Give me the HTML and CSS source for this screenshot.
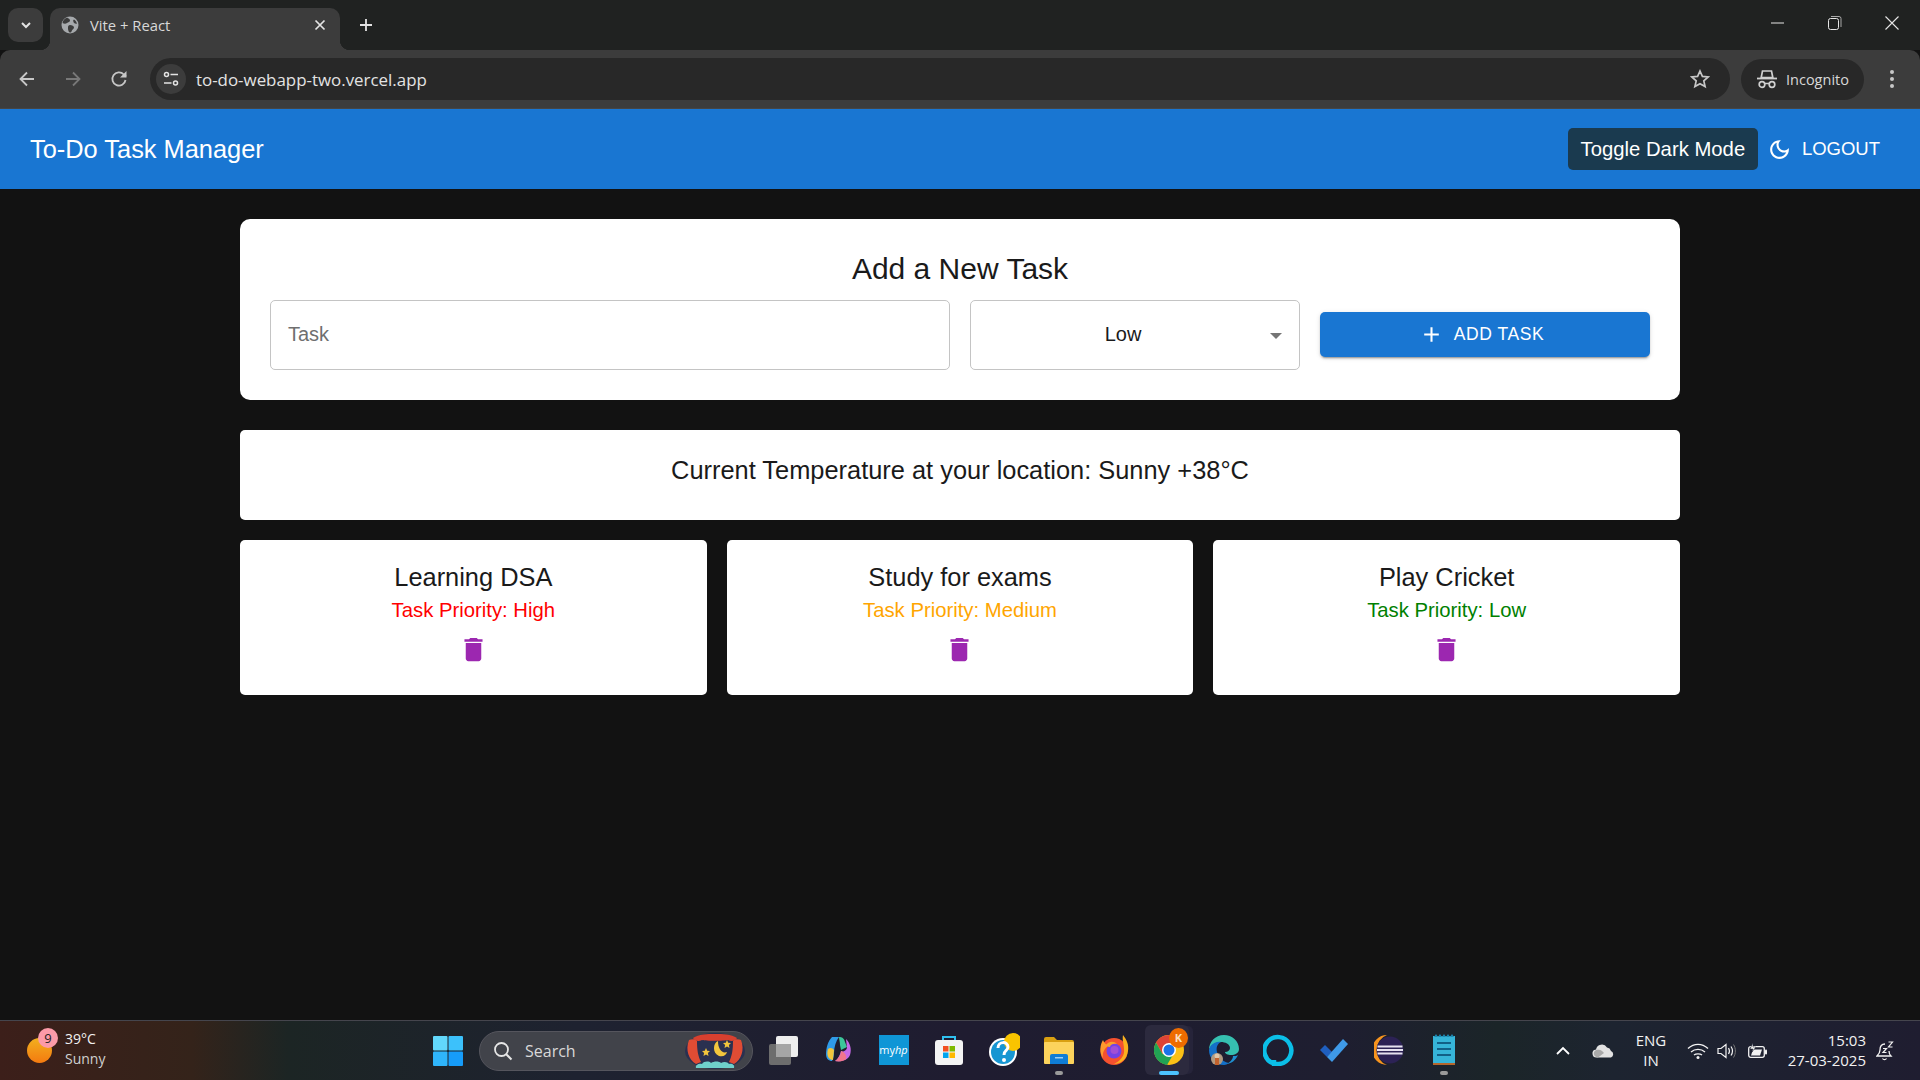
FILE: index.html
```html
<!DOCTYPE html>
<html lang="en">
<head>
    <meta charset="UTF-8">
    <title>To-Do Task Manager</title>
    <link rel="stylesheet" href="styles.css">
</head>
<body>
    <!-- browser tabs -->
    <div class="tabstrip">
        <div class="tab-search">
            <svg width="14" height="14" viewBox="0 0 14 14"><path d="M3 5l4 4 4-4" fill="none" stroke="#e3e3e3" stroke-width="2"/></svg>
        </div>
        <div class="tab">
            <svg class="favicon" width="18" height="18" viewBox="0 0 18 18">
                <circle cx="9" cy="9" r="8.5" fill="#a6a9ac"/>
                <path d="M6 1.500c1.500 1 3 1.500 3 3S7 6 6 7 3 8 1.500 7C1.800 4.500 3.500 2.500 6 1.500zM9 9c2 0 4 1 4 2.500s-2 2-2.500 4S8 16.500 7.500 15 7 13 7 11.500 7.500 9 9 9zM13 3.500c1.500 1 2.500 2.500 3 4-1.500.5-3 0-3.500-1.500S12 4 13 3.500z" fill="#3c3c3c"/>
            </svg>
            <span class="tab-title">Vite + React</span>
            <svg class="tab-close" width="12" height="12" viewBox="0 0 12 12"><path d="M1.500 1.500l9 9M10.500 1.500l-9 9" stroke="#e3e3e3" stroke-width="1.700"/></svg>
        </div>
        <svg class="new-tab" width="14" height="14" viewBox="0 0 14 14"><path d="M7 1v12M1 7h12" stroke="#e3e3e3" stroke-width="1.800"/></svg>
        <div class="window-controls">
            <div class="win-btn"><svg width="14" height="14" viewBox="0 0 14 14"><path d="M0 7h13" stroke="#e6e6e6" stroke-width="1"/></svg></div>
            <div class="win-btn"><svg width="14" height="14" viewBox="0 0 14 14"><rect x=".5" y="2.500" width="10" height="11" rx="2" fill="none" stroke="#e6e6e6"/><path d="M3 .5h8a2 2 0 0 1 2 2V11" fill="none" stroke="#a8a8a8"/></svg></div>
            <div class="win-btn"><svg width="14" height="14" viewBox="0 0 14 14"><path d="M.5.5l13 13M13.500.5l-13 13" stroke="#e6e6e6" stroke-width="1.100"/></svg></div>
        </div>
    </div>

    <!-- browser toolbar -->
    <div class="toolbar">
        <div class="nav-btn"><svg width="18" height="18" viewBox="0 0 18 18"><path d="M16 9H3M9 2.500L2.500 9 9 15.500" fill="none" stroke="#c7c7c7" stroke-width="1.800"/></svg></div>
        <div class="nav-btn"><svg width="18" height="18" viewBox="0 0 18 18"><path d="M2 9h13M9 2.500L15.500 9 9 15.500" fill="none" stroke="#787878" stroke-width="1.800"/></svg></div>
        <div class="nav-btn"><svg width="18" height="18" viewBox="0 0 18 18"><path d="M15.500 10a6.600 6.600 0 1 1-1.700-5.500L16 6.500" fill="none" stroke="#c7c7c7" stroke-width="1.800"/><path d="M16.500 1v6.500H10z" fill="#c7c7c7"/></svg></div>
        <div class="omnibox">
            <div class="site-info">
                <svg width="16" height="16" viewBox="0 0 16 16"><circle cx="3.500" cy="3.500" r="2" fill="none" stroke="#e3e3e3" stroke-width="1.500"/><path d="M7.500 3.500H15M1 12h7.500" stroke="#e3e3e3" stroke-width="1.500"/><circle cx="12.500" cy="12" r="2" fill="none" stroke="#e3e3e3" stroke-width="1.500"/></svg>
            </div>
            <span class="url">to-do-webapp-two.vercel.app</span>
            <svg class="star" width="20" height="20" viewBox="0 0 20 20"><path d="M10 2l2.400 5.400 5.800.6-4.400 3.900 1.300 5.700L10 14.700l-5.100 2.900 1.300-5.700L1.800 8l5.800-.6z" fill="none" stroke="#c7c7c7" stroke-width="1.700"/></svg>
        </div>
        <div class="incognito">
            <svg width="20" height="20" viewBox="0 0 20 20"><path d="M5.500 2h9l1.300 6.500H4.200z" fill="none" stroke="#d0d0d0" stroke-width="1.700"/><path d="M0 9.500h20" stroke="#d0d0d0" stroke-width="1.800"/><circle cx="5" cy="15.500" r="2.800" fill="none" stroke="#d0d0d0" stroke-width="1.700"/><circle cx="15" cy="15.500" r="2.800" fill="none" stroke="#d0d0d0" stroke-width="1.700"/><path d="M7.500 14.500h5" stroke="#d0d0d0" stroke-width="1.500"/></svg>
            <span>Incognito</span>
        </div>
        <div class="menu-dots"><i></i><i></i><i></i></div>
    </div>

    <!-- the app -->
    <header class="app-bar">
        <div class="app-title">To-Do Task Manager</div>
        <button class="toggle-btn">Toggle Dark Mode</button>
        <svg class="moon" width="25" height="25" viewBox="0 0 24 24"><path d="M9.370 5.510c-.18.64-.27 1.310-.27 1.990 0 4.080 3.320 7.400 7.400 7.400.68 0 1.350-.09 1.990-.27C17.450 17.190 14.930 19 12 19c-3.860 0-7-3.140-7-7 0-2.930 1.810-5.450 4.370-6.490zM12 3c-4.970 0-9 4.030-9 9s4.030 9 9 9 9-4.030 9-9c0-.46-.04-.92-.1-1.360-.98 1.370-2.580 2.260-4.400 2.260-2.980 0-5.400-2.420-5.400-5.400 0-1.810.89-3.420 2.260-4.400-.44-.06-.9-.1-1.360-.1z" fill="#fff"/></svg>
        <span class="logout">LOGOUT</span>
    </header>

    <main class="content">
        <section class="card form-card">
            <h2 class="form-heading">Add a New Task</h2>
            <div class="form-row">
                <div class="field task-field">Task</div>
                <div class="field priority-field">
                    <span class="priority-value">Low</span>
                    <span class="select-arrow"></span>
                </div>
                <button class="add-btn">
                    <svg width="25" height="25" viewBox="0 0 24 24"><path d="M19 13h-6v6h-2v-6H5v-2h6V5h2v6h6v2z" fill="#fff"/></svg>
                    <span>ADD TASK</span>
                </button>
            </div>
        </section>

        <section class="card weather-card">Current Temperature at your location: Sunny +38°C</section>

        <section class="task-grid">
            <div class="card task-card">
                <div class="task-name">Learning DSA</div>
                <div class="task-priority high">Task Priority: High</div>
                <svg class="trash" width="31" height="31" viewBox="0 0 24 24"><path d="M6 19c0 1.100.9 2 2 2h8c1.100 0 2-.9 2-2V7H6v12zM19 4h-3.500l-1-1h-5l-1 1H5v2h14V4z"/></svg>
            </div>
            <div class="card task-card">
                <div class="task-name">Study for exams</div>
                <div class="task-priority medium">Task Priority: Medium</div>
                <svg class="trash" width="31" height="31" viewBox="0 0 24 24"><path d="M6 19c0 1.100.9 2 2 2h8c1.100 0 2-.9 2-2V7H6v12zM19 4h-3.500l-1-1h-5l-1 1H5v2h14V4z"/></svg>
            </div>
            <div class="card task-card">
                <div class="task-name">Play Cricket</div>
                <div class="task-priority low">Task Priority: Low</div>
                <svg class="trash" width="31" height="31" viewBox="0 0 24 24"><path d="M6 19c0 1.100.9 2 2 2h8c1.100 0 2-.9 2-2V7H6v12zM19 4h-3.500l-1-1h-5l-1 1H5v2h14V4z"/></svg>
            </div>
        </section>
    </main>

    <!-- windows taskbar -->
    <footer class="taskbar">
        <div class="weather">
            <div class="sun"><span class="sun-badge">9</span></div>
            <div class="weather-text">
                <div>39°C</div>
                <div class="dim">Sunny</div>
            </div>
        </div>

        <svg class="start" width="30" height="30" viewBox="0 0 30 30">
            <rect x="0" y="0" width="14.500" height="14.500" rx="1" fill="#62d8fb"/>
            <rect x="15.500" y="0" width="14.500" height="14.500" rx="1" fill="#3cc1fb"/>
            <rect x="0" y="15.500" width="14.500" height="14.500" rx="1" fill="#2fb5fb"/>
            <rect x="15.500" y="15.500" width="14.500" height="14.500" rx="1" fill="#169cf9"/>
        </svg>

        <div class="search-pill">
            <svg width="20" height="20" viewBox="0 0 20 20"><circle cx="8.500" cy="8.500" r="6.500" fill="none" stroke="#e6e6e6" stroke-width="1.800"/><path d="M13 13l5.500 5.500" stroke="#e6e6e6" stroke-width="2"/></svg>
            <span class="search-label">Search</span>
            <svg class="doodle" width="64" height="36" viewBox="0 0 60 36">
                <ellipse cx="30" cy="18" rx="30" ry="18" fill="#2a3050"/>
                <path d="M8 5C14 1 22 1 30 1s16 0 22 4c-1 3-6 4-9 2-4 1-22 1-26 0-3 2-8 1-9-2z" fill="#d8402f"/>
                <path d="M4 7c3-1 6-1 8 1 0 9 1 15 4 21l-5 2C4 27 0 17 4 7zM56 7c-3-1-6-1-8 1 0 9-1 15-4 21l5 2c7-4 11-14 7-24z" fill="#e04c34"/>
                <path d="M11 35c-1-3 3-5 6-4 2-3 7-3 9-1 3-2 8-2 10 0 3-2 7-1 8 1 3-1 6 1 5 4z" fill="#6fd0cb"/>
                <path d="M33 8c-5 2-6 12 1 15 5 1 7-1 8-4-5 2-9-3-9-11z" fill="#f2c53d"/>
                <path d="M21 15l1.200 2.800 2.800.3-2.100 1.900.6 2.900-2.500-1.500-2.500 1.500.6-2.900-2.100-1.900 2.800-.3zM42 7l1.200 2.800 2.800.3-2.100 1.900.6 2.900-2.500-1.500-2.500 1.500.6-2.900-2.100-1.900 2.800-.3z" fill="#f2c53d"/>
            </svg>
        </div>

        <div class="task-icons">
            <!-- task view -->
            <div class="slot"><svg width="30" height="30" viewBox="0 0 30 30"><rect x="0" y="9" width="22" height="21" rx="2" fill="#6d6d6d"/><rect x="7" y="1" width="22" height="21" rx="2" fill="#eeeeee"/><rect x="7" y="9" width="15" height="13" fill="#a5a5a5"/></svg></div>
            <!-- copilot -->
            <div class="slot"><svg width="30" height="30" viewBox="0 0 30 30">
                <path d="M8 2h7c-3 4-5 10-5 16 0 3-1 6-2 8-3 0-6-2-6-7 0-6 2-13 6-17z" fill="#2f9be8"/>
                <path d="M4 14c2-2 5-1 6 1l-1 10c-4 0-7-4-5-11z" fill="#f2c53d"/>
                <path d="M15 2c3 0 5 1 6 5l2 5-6 3-1-5c0-3-1-6-1-8z" fill="#3cc59a"/>
                <path d="M22 4c4 4 6 10 4 16-2 5-8 7-15 6 3-2 5-6 6-10 2 1 5 0 6-3z" fill="#c568e6"/>
                <path d="M17 16c0 4-3 8-6 10 5 1 9 0 11-2 1-3-1-7-5-8z" fill="#f0758c"/>
            </svg></div>
            <!-- myhp -->
            <div class="slot"><div class="myhp">my<b>hp</b></div></div>
            <!-- store -->
            <div class="slot"><svg width="30" height="30" viewBox="0 0 30 30">
                <path d="M9 6V2h12v4" fill="none" stroke="#2fc0f0" stroke-width="2"/>
                <rect x="1" y="5" width="28" height="25" rx="3" fill="#f4f4f4"/>
                <rect x="9" y="11" width="5.500" height="5.500" fill="#f25022"/><rect x="15.500" y="11" width="5.500" height="5.500" fill="#7fba00"/>
                <rect x="9" y="17.500" width="5.500" height="5.500" fill="#00a4ef"/><rect x="15.500" y="17.500" width="5.500" height="5.500" fill="#ffb900"/>
            </svg></div>
            <!-- get help -->
            <div class="slot help-slot"><svg width="32" height="34" viewBox="0 0 32 34">
                <circle cx="15" cy="19" r="14" fill="#fff"/><circle cx="15" cy="19" r="12" fill="#1796d2"/>
                <circle cx="25" cy="9" r="9" fill="#f9c400"/>
                <path d="M10 15c0-7 10-7 10-1 0 4-4 3-4 8" fill="none" stroke="#fff" stroke-width="3"/><circle cx="16" cy="27" r="2" fill="#fff"/>
            </svg></div>
            <!-- explorer -->
            <div class="slot pinned"><svg width="30" height="30" viewBox="0 0 30 30">
                <path d="M0 4a2 2 0 0 1 2-2h8l3 3h15a2 2 0 0 1 2 2v4H0z" fill="#d9a011"/>
                <rect x="0" y="7" width="30" height="22" rx="1" fill="#fcd35c"/>
                <path d="M6 21a2 2 0 0 1 2-2h14a2 2 0 0 1 2 2v8H6z" fill="#0f7dd6"/><rect x="11" y="22" width="8" height="1.500" fill="#9bd0f5"/>
            </svg></div>
            <!-- firefox -->
            <div class="slot"><svg width="30" height="30" viewBox="0 0 30 30">
                <circle cx="15" cy="16.500" r="13.500" fill="#f5512f"/>
                <path d="M24 0c4 5 6 10 5 16-1 8-7 13-14 13 6-3 11-8 10-15 0-5-2-9-1-14z" fill="#fbb01e"/>
                <path d="M4 5c-3 5-4 12 0 18-1-6 2-10 6-13C7 10 5 8 4 5z" fill="#ff9a2d"/>
                <circle cx="15" cy="16" r="7.500" fill="#7542e5"/><circle cx="15.500" cy="15" r="4" fill="#a14fd6"/>
                <path d="M7 10c3-4 8-4 11-1-4-1-7 1-7 3-2 0-3-1-4-2z" fill="#f8a02c"/>
            </svg></div>
            <!-- chrome, running -->
            <div class="slot active">
                <svg width="30" height="30" viewBox="0 0 30 30">
                    <circle cx="15" cy="15" r="15" fill="#fbc116"/>
                    <path d="M15 0A15 15 0 0 0 2 7.500L8.500 19 15 8h13A15 15 0 0 0 15 0z" fill="#dd4337"/>
                    <path d="M2 7.500A15 15 0 0 0 13 30l6.500-11-11 0z" fill="#21a354"/>
                    <circle cx="15" cy="15" r="7" fill="#fff"/><circle cx="15" cy="15" r="5.500" fill="#1a73e8"/>
                </svg>
                <span class="chrome-badge">K</span>
            </div>
            <!-- edge -->
            <div class="slot"><svg width="30" height="30" viewBox="0 0 30 30">
                <path d="M15 0c8 0 15 6 15 14 0 4-4 6-8 6-3 0-6-1-6-3 3 0 5-2 5-4 0-4-5-6-9-6C6 7 1 11 0 15 0 7 6 0 15 0z" fill="#36c0b0"/>
                <path d="M0 15c1-5 6-9 12-8-4 2-5 6-4 10 1 5 6 10 12 11-2 1-3 2-5 2C6 30 0 23 0 15z" fill="#1470c8"/>
                <path d="M29 20c-2 5-7 9-12 9 4-1 7-5 7-8 2 0 4 0 5-1z" fill="#1f8fd0"/>
                <circle cx="8" cy="24" r="6" fill="#b19a80"/><circle cx="8" cy="21" r="2.500" fill="#e0c6a8"/><rect x="6" y="23" width="4" height="7" fill="#c2622d"/>
            </svg></div>
            <!-- alexa -->
            <div class="slot"><svg width="32" height="32" viewBox="0 0 32 32"><path d="M11 29.500A13.500 13.500 0 1 1 16 30l-5 0 0-4" fill="none" stroke="#0bbfe8" stroke-width="4.500"/></svg></div>
            <!-- to do -->
            <div class="slot"><svg width="30" height="30" viewBox="0 0 30 30"><path d="M1 15l5-5 7 7-5 5z" fill="#1f5fbf"/><path d="M8 22L24 4l5 5-16 18z" fill="#3f9ae8"/></svg></div>
            <!-- eclipse -->
            <div class="slot"><svg width="30" height="30" viewBox="0 0 30 30">
                <path d="M13 0a15 15 0 0 0 0 30A15 15 0 0 1 3 15 15 15 0 0 1 13 0z" fill="#f7941e"/>
                <circle cx="16" cy="15" r="13.500" fill="#2c2255"/>
                <path d="M3.500 10.500h25v2h-25zM3 14h26v2H3zM3.500 17.500h25v2h-25z" fill="#e6e2f0"/>
            </svg></div>
            <!-- notepad -->
            <div class="slot pinned"><svg width="24" height="32" viewBox="0 0 24 32">
                <rect x="1" y="2" width="22" height="27" fill="#36b4d8"/><rect x="1" y="29" width="22" height="2" fill="#b5662b"/>
                <path d="M2 3l2-3 2 3 2-3 2 3 2-3 2 3 2-3 2 3 2-3 2 3z" fill="#1d88b0"/>
                <path d="M5 9h14M5 15h14M5 21h14" stroke="#125f86" stroke-width="2"/>
            </svg></div>
        </div>

        <div class="tray">
            <div class="tray-slot chevron"><svg width="14" height="9" viewBox="0 0 14 9"><path d="M1 8l6-6 6 6" fill="none" stroke="#fff" stroke-width="1.800"/></svg></div>
            <div class="tray-slot cloud"><svg width="22" height="14" viewBox="0 0 22 14"><path d="M5 13.500a4 4 0 0 1-1-8 6 6 0 0 1 11-2 5 5 0 0 1 4 3.500 3.500 3.500 0 0 1 0 6.500z" fill="#e2e2e2"/><path d="M4 6c5-1 6 1 8 3l-6 4.500H5A4 4 0 0 1 4 6z" fill="#a9a9a9"/></svg></div>
            <div class="tray-slot lang"><div>ENG</div><div>IN</div></div>
            <div class="tray-slot wifi"><svg width="22" height="16" viewBox="0 0 22 16"><path d="M1 5.500c6-5.500 14-5.500 20 0M4 9c4-3.500 10-3.500 14 0M7 12c2-1.500 6-1.500 8 0" fill="none" stroke="#f2f2f2" stroke-width="1.400"/><circle cx="11" cy="14.500" r="1.500" fill="#f2f2f2"/></svg></div>
            <div class="tray-slot vol"><svg width="20" height="16" viewBox="0 0 20 16"><path d="M1 5.500h3L9 1.500v13l-5-4H1z" fill="none" stroke="#f2f2f2" stroke-width="1.200"/><path d="M11.500 5c1.300 2 1.300 4 0 6M14 3.500c2 3 2 6 0 9" fill="none" stroke="#f2f2f2" stroke-width="1.200"/><path d="M16.500 1.500c2.500 4 2.500 9 0 13" fill="none" stroke="#777" stroke-width="1"/></svg></div>
            <div class="tray-slot battery"><svg width="20" height="16" viewBox="0 0 20 16"><rect x=".7" y="3.700" width="15.600" height="10.600" rx="2" fill="none" stroke="#f2f2f2" stroke-width="1.300"/><rect x="17" y="6.500" width="2" height="5" rx="1" fill="#f2f2f2"/><path d="M3 12.500l2-6h9l-2 6z" fill="#f2f2f2"/><path d="M5 0L2 6h3L4 9l4-5H5z" fill="#f2f2f2" stroke="#1c2030" stroke-width=".5"/></svg></div>
            <div class="clock"><div>15:03</div><div>27-03-2025</div></div>
            <div class="tray-slot bell"><svg width="18" height="20" viewBox="0 0 18 20"><path d="M9 3C5 3 4 6 4 9c0 3-1 4-3 6h14c-2-2-2-3-2-5M6.500 17.500c1 1.500 3 1.500 4 0" fill="none" stroke="#f2f2f2" stroke-width="1.300"/><path d="M7 7.500h3.500L7 11.500h3.500M12.500 1h4l-4 5h4" fill="none" stroke="#f2f2f2" stroke-width="1.200"/></svg></div>
        </div>
    </footer>
</body>
</html>
```

FILE: styles.css
```css
* { box-sizing: border-box; }
html, body { height: 100%; }
body { margin: 0; height: 1080px; display: flex; flex-direction: column; overflow: hidden; background: #121212; font-family: "Liberation Sans", Arial, sans-serif; }
svg { display: block; flex: none; }

/* browser chrome */
.tabstrip { height: 50px; flex: none; background: #202221; display: flex; align-items: flex-start; padding: 8px 0 0 8px; font-family: "Open Sans", sans-serif; }
.tab-search { width: 35px; height: 34px; background: #3c3c3c; border-radius: 10px; display: flex; align-items: center; justify-content: center; }
.tab { position: relative; width: 290px; height: 42px; margin-left: 7px; background: #3c3c3c; border-radius: 10px 10px 0 0; display: flex; align-items: center; padding: 0 14px 8px 11px; color: #d8d8d8; font-size: 14.800px; }
.tab::after { content: ""; position: absolute; right: -10px; bottom: 0; width: 10px; height: 10px; background: radial-gradient(circle at 100% 0, transparent 10px, #3c3c3c 10.500px); }
.tab::before { content: ""; position: absolute; left: -10px; bottom: 0; width: 10px; height: 10px; background: radial-gradient(circle at 0 0, transparent 10px, #3c3c3c 10.500px); }
.tab-title { margin-left: 11px; flex: 1; }
.new-tab { margin: 10px 0 0 19px; }
.window-controls { margin-left: auto; margin-top: -8px; display: flex; }
.win-btn { width: 57px; height: 46px; display: flex; align-items: center; justify-content: center; }

.toolbar { height: 59px; flex: none; background: #3c3c3c; border-bottom: 1px solid #454545; border-radius: 10px 10px 0 0; display: flex; align-items: center; padding-left: 4px; font-family: "Open Sans", sans-serif; }
.nav-btn { width: 46px; height: 42px; display: flex; align-items: center; justify-content: center; }
.omnibox { flex: 1; height: 42px; margin-left: 8px; background: #282828; border-radius: 21px; display: flex; align-items: center; padding: 0 20px 0 6px; }
.site-info { width: 30px; height: 30px; border-radius: 50%; background: #3c3c3c; display: flex; align-items: center; justify-content: center; }
.url { margin-left: 10px; flex: 1; color: #e3e3e3; font-size: 16.900px; }
.incognito { width: 123px; height: 41px; margin-left: 11px; background: #282828; border-radius: 21px; display: flex; align-items: center; padding-left: 16px; gap: 9px; color: #d8d8d8; font-size: 14.500px; }
.menu-dots { width: 56px; display: flex; flex-direction: column; align-items: center; gap: 3px; }
.menu-dots i { width: 4px; height: 4px; border-radius: 50%; background: #c7c7c7; }

/* app bar */
.app-bar { height: 80px; flex: none; background: #1976d2; color: #fff; display: flex; align-items: center; padding: 0 40px 0 30px; }
.app-title { flex: 1; font-size: 25.400px; }
.toggle-btn { width: 190px; height: 42px; margin-right: -1px; border: 0; border-radius: 5px; background: #1a3a4f; color: #fff; font: 20.300px "Liberation Sans", Arial, sans-serif; padding: 0; }
.moon { margin-left: 10px; }
.logout { margin-left: 10px; font-size: 18.500px; }

/* main page */
.content { flex: 1; padding: 30px 240px 0; display: flex; flex-direction: column; }
.card { background: #fff; color: #1a1a1a; }
.form-card { height: 181px; padding: 30px; border-radius: 10px; }
.form-heading { margin: 0 0 11px; font-size: 30px; font-weight: 400; line-height: 40px; text-align: center; }
.form-row { display: grid; grid-template-columns: 680px 330px 330px; column-gap: 20px; align-items: center; }
.field { height: 70px; padding-bottom: 2px; border: 1px solid #c4c4c4; border-radius: 5px; display: flex; align-items: center; font-size: 20px; }
.task-field { padding-left: 17px; color: #6f6f6f; }
.priority-field { position: relative; justify-content: center; padding-right: 24px; }
.select-arrow { position: absolute; right: 17px; top: 32px; border-left: 6px solid transparent; border-right: 6px solid transparent; border-top: 6px solid #757575; }
.add-btn { height: 45px; margin-top: -1px; border: 0; border-radius: 5px; background: #1976d2; color: #fff; display: flex; align-items: center; justify-content: center; gap: 10px; font: 17.500px "Liberation Sans", Arial, sans-serif; letter-spacing: .6px; padding: 0 7px 1px 0; box-shadow: 0 3px 1px -2px rgba(0,0,0,.2), 0 2px 2px rgba(0,0,0,.14), 0 1px 5px rgba(0,0,0,.12); }
.weather-card { height: 90px; margin-top: 30px; padding-top: 25px; border-radius: 5px; font-size: 25.400px; line-height: 30px; text-align: center; }
.task-grid { margin-top: 20px; display: grid; grid-template-columns: repeat(3, 1fr); gap: 20px; }
.task-card { height: 155px; padding-top: 20px; border-radius: 5px; display: flex; flex-direction: column; align-items: center; }
.task-name { font-size: 25.400px; line-height: 34px; }
.task-priority { font-size: 20.300px; line-height: 32px; }
.high { color: #ff0000; }
.medium { color: #ffa500; }
.low { color: #008000; }
.trash { margin-top: 8px; fill: #9c27b0; }

/* taskbar */
.taskbar { height: 60px; flex: none; border-top: 1px solid #45454d; background: linear-gradient(90deg, #3c1f1a 0, #34231a 10%, #1c2524 15%, #1e2230 30%, #1f1c30 50%, #1e1e30 70%, #1b2528 78%, #1d2430 84%, #1f1d30 100%); display: flex; align-items: center; color: #f2f2f2; font-family: "Open Sans", sans-serif; }
.weather { width: 433px; flex: none; display: flex; align-items: center; padding-left: 27px; }
.sun { position: relative; width: 25px; height: 25px; border-radius: 50%; background: linear-gradient(#f2b01e, #f47a10); }
.sun-badge { position: absolute; left: 11px; top: -10px; width: 20px; height: 20px; border-radius: 50%; background: #fb9aa8; color: #222; font-size: 13px; line-height: 20px; text-align: center; }
.weather-text { margin: 0 0 4px 13px; font-size: 14px; line-height: 20px; }
.dim { color: #d0d0d0; }
.search-pill { width: 274px; height: 40px; margin-left: 16px; border: 1px solid #55555d; border-radius: 20px; background: #41434a; display: flex; align-items: center; padding-left: 13px; flex: none; }
.search-label { margin-left: 12px; flex: 1; font-size: 16px; color: #d8d8d8; }
.doodle { margin-right: 5px; }
.task-icons { margin: 0 0 2px 3px; display: flex; flex: none; }
.slot { position: relative; isolation: isolate; width: 55px; height: 50px; display: flex; align-items: center; justify-content: center; }
.pinned::after { content: ""; position: absolute; left: 24px; bottom: 0; width: 8px; height: 4px; border-radius: 2px; background: #9a9a9a; }
.active::before { content: ""; position: absolute; z-index: -1; left: 4px; top: 0; bottom: 0; width: 44px; background: #2c2a3e; border-radius: 6px; box-shadow: 5px 0 0 -1px #26243a; }
.active::after { content: ""; position: absolute; left: 18px; bottom: 0; width: 20px; height: 4px; border-radius: 2px; background: #4cc2ff; }
.chrome-badge { position: absolute; left: 28px; top: 3px; width: 19px; height: 20px; border-radius: 50%; background: #ee6c00; color: #fde0c0; font-size: 11px; font-weight: 700; line-height: 20px; text-align: center; }
.myhp { width: 30px; height: 30px; background: #0f96d6; color: #fff; font-size: 11px; line-height: 30px; text-align: center; }
.myhp b { font-style: italic; font-weight: 400; }
.tray { margin-left: auto; padding-right: 23px; display: flex; align-items: center; flex: none; font-size: 15px; }
.tray-slot { display: flex; align-items: center; justify-content: center; }
.chevron, .cloud { width: 40px; }
.lang { width: 56px; flex-direction: column; line-height: 20px; padding-bottom: 1px; }
.wifi { width: 38px; }
.vol { width: 20px; }
.battery { width: 42px; }
.clock { width: 87px; padding-bottom: 2px; text-align: right; line-height: 20px; }
.bell { width: 24px; margin-left: 7px; }
```
